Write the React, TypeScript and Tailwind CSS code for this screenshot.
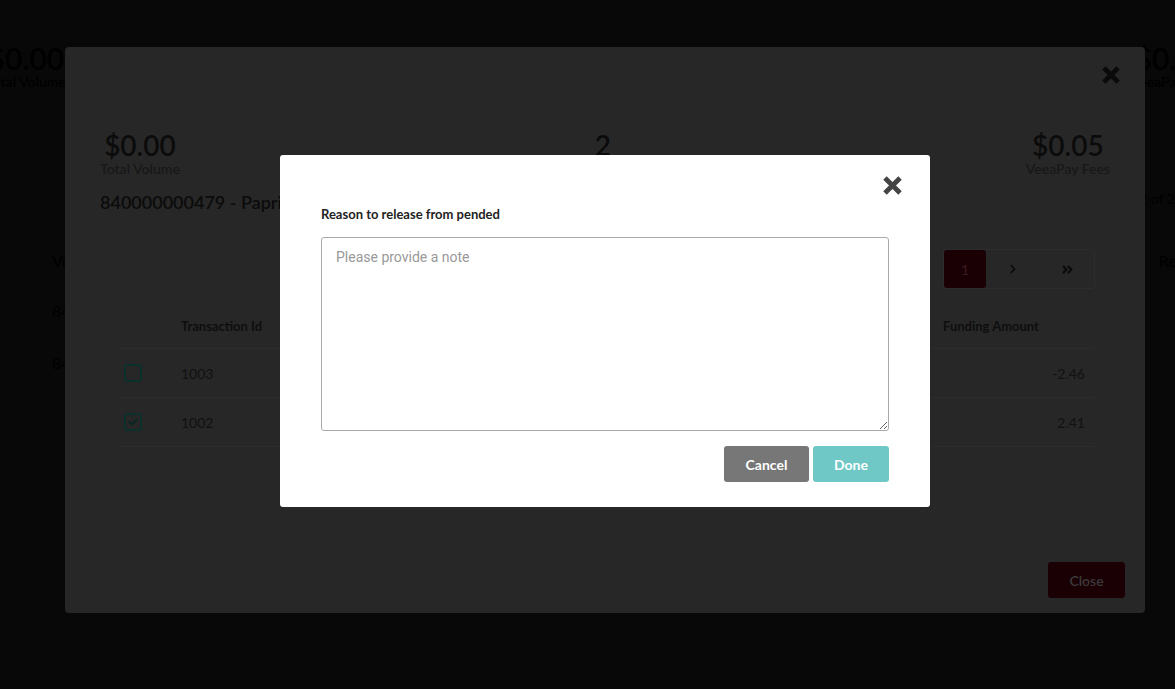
import React from 'react';
import { FaChevronRight, FaAngleDoubleRight, FaCheck } from 'react-icons/fa';

const CloseX = ({ color, size }: { color: string; size: number }) => (
  <svg width={size} height={size} viewBox="0 0 18 18">
    <path d="M3.5 3.5 L14.5 14.5 M14.5 3.5 L3.5 14.5" stroke={color} strokeWidth="4.6" strokeLinecap="square" />
  </svg>
);

const Stat = ({ value, label }: { value: string; label: string }) => (
  <div className="flex flex-col items-center">
    <div className="text-[28px] leading-[30px] font-semibold text-[#0b0b0b]">{value}</div>
    <div className="text-[14px] leading-[18px] font-semibold text-[#181818]">{label}</div>
  </div>
);

const rows = [
  { id: '1003', amount: '-2.46', checked: false },
  { id: '1002', amount: '2.41', checked: true },
];

const App = () => {
  return (
    <div className="relative w-[1175px] h-[689px] overflow-hidden bg-[#080808] font-['Lato',sans-serif]">
      {/* page behind the overlays */}
      <div className="flex flex-col text-[#000]">
        <div className="flex justify-between pt-[42px] ml-[-14px] mr-[-40px]">
          <div className="flex flex-col items-center">
            <div className="text-[30px] leading-[32px] font-semibold">$0.00</div>
            <div className="text-[14px] leading-[16px] font-semibold">Total Volume</div>
          </div>
          <div className="flex flex-col items-center">
            <div className="text-[30px] leading-[32px] font-semibold">$0.05</div>
            <div className="text-[14px] leading-[16px] font-semibold">VeeaPay Fees</div>
          </div>
        </div>
        <div className="flex justify-end mt-[98px] text-[14px]">1 - 2 of 2</div>
        <div className="flex justify-between mt-[40px] pl-[52px] text-[16px] font-semibold">
          <span>Vendor</span>
          <span className="mr-[-40px]">Reserve</span>
        </div>
        <div className="pl-[52px] mt-[26px] text-[16px]">840000000479</div>
        <div className="pl-[52px] mt-[28px] text-[16px]">840000000480</div>
      </div>

      {/* outer modal */}
      <div className="absolute left-[65px] top-[47px] w-[1080px] h-[566px] rounded-[4px] bg-[#272727] flex flex-col">
        <div className="flex justify-end pt-[19px] pr-[25px] h-[56px]">
          <CloseX color="#0a0a0a" size={18} />
        </div>
        <div className="flex justify-between px-[35px] mt-[27px]">
          <Stat value="$0.00" label="Total Volume" />
          <div className="flex flex-col items-center">
            <div className="text-[28px] leading-[30px] font-semibold text-[#0b0b0b]">2</div>
            <div className="text-[14px] leading-[18px] font-semibold text-[#181818]">Transactions</div>
          </div>
          <Stat value="$0.05" label="VeeaPay Fees" />
        </div>
        <div className="px-[35px] mt-[12px] text-[18px] font-semibold text-[#0b0b0b] leading-[24px]">
          840000000479 - Paprika Restaurant
        </div>
        <div className="flex justify-end pr-[50px] mt-[35px]">
          <div className="flex h-[40px] w-[152px] rounded-[3px] border border-[#2d2d2d]">
            <div className="w-[42px] rounded-[3px] bg-[#1a0005] text-[#3d1a20] text-[14px] flex items-center justify-center">
              1
            </div>
            <div className="flex-1 flex items-center justify-center text-[#0a0a0a]">
              <FaChevronRight size={10} />
            </div>
            <div className="flex-1 flex items-center justify-center text-[#0a0a0a]">
              <FaAngleDoubleRight size={13} />
            </div>
          </div>
        </div>
        <div className="ml-[55px] mr-[50px] mt-[16px]">
          <div className="flex h-[44px] items-center border-b border-[#2c2c2c] text-[13px] font-bold text-[#0e0e0e]">
            <div className="w-[61px]" />
            <div className="flex-1">Transaction Id</div>
            <div className="w-[152px]">Funding Amount</div>
          </div>
          {rows.map((r) => (
            <div key={r.id} className="flex h-[49px] items-center border-b border-[#2c2c2c] text-[14px] text-[#111]">
              <div className="w-[61px] pl-[4px]">
                <div className="w-[18px] h-[18px] rounded-[3px] border-2 border-[#0c302b] flex items-center justify-center text-[#0a2622]">
                  {r.checked && <FaCheck size={10} />}
                </div>
              </div>
              <div className="flex-1">{r.id}</div>
              <div className="w-[152px] text-right pr-[10px]">{r.amount}</div>
            </div>
          ))}
        </div>
        <div className="mt-auto flex justify-end pr-[20px] pb-[15px]">
          <div className="w-[77px] h-[36px] rounded-[3px] bg-[#1a0005] text-[#3a3a3a] text-[14px] font-semibold flex items-center justify-center">
            Close
          </div>
        </div>
      </div>

      {/* inner modal */}
      <div className="absolute left-[280px] top-[155px] w-[650px] h-[352px] rounded-[3px] bg-white flex flex-col px-[41px]">
        <div className="flex justify-end pt-[21px] mr-[-13px]">
          <CloseX color="#444" size={19} />
        </div>
        <div className="mt-[11px] text-[13px] font-bold text-[#222] leading-[16px]">Reason to release from pended</div>
        <textarea
          className="mt-[15px] h-[194px] w-full rounded-[3px] border border-[#aaa] px-[14px] py-[9px] text-[14px] font-['Roboto',sans-serif] placeholder-[#999] outline-none resize-y"
          placeholder="Please provide a note"
        />
        <div className="flex justify-end gap-[4px] mt-[15px]">
          <button className="w-[85px] h-[36px] rounded-[3px] bg-[#777] text-white text-[14px] font-bold">Cancel</button>
          <button className="w-[76px] h-[36px] rounded-[3px] bg-[#6fc8c5] text-white text-[14px] font-bold">Done</button>
        </div>
      </div>
    </div>
  );
};

export default App;
